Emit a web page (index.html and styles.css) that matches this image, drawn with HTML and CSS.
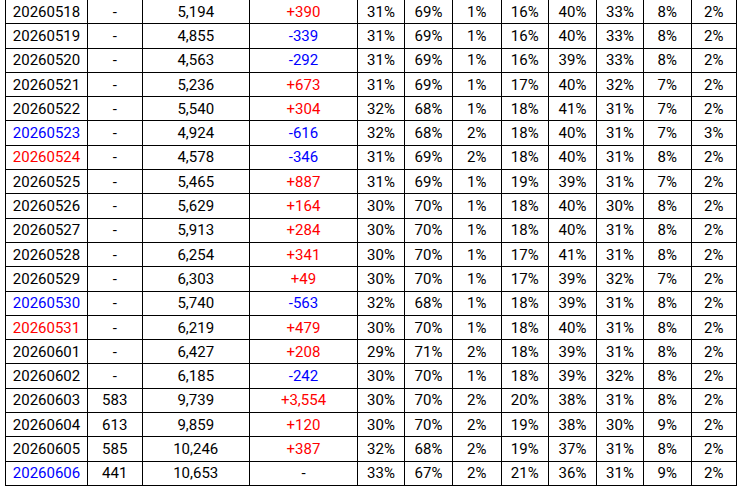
FILE: index.html
```html
<!DOCTYPE html>
<html>
<head>
<meta charset="utf-8">
<link rel="stylesheet" href="styles.css">
</head>
<body>
<div class="wrap">
<table class="grid">
<colgroup>
<col class="c-date"><col class="c-a"><col class="c-b"><col class="c-c">
<col class="c-p1"><col class="c-p2"><col class="c-p3"><col class="c-p4">
<col class="c-p5"><col class="c-p6"><col class="c-p7"><col class="c-p8">
</colgroup>
<tbody>
<tr><td>20260518</td><td>-</td><td>5,194</td><td class="up">+390</td><td>31%</td><td>69%</td><td>1%</td><td>16%</td><td>40%</td><td>33%</td><td>8%</td><td>2%</td></tr>
<tr><td>20260519</td><td>-</td><td>4,855</td><td class="down">-339</td><td>31%</td><td>69%</td><td>1%</td><td>16%</td><td>40%</td><td>33%</td><td>8%</td><td>2%</td></tr>
<tr><td>20260520</td><td>-</td><td>4,563</td><td class="down">-292</td><td>31%</td><td>69%</td><td>1%</td><td>16%</td><td>39%</td><td>33%</td><td>8%</td><td>2%</td></tr>
<tr><td>20260521</td><td>-</td><td>5,236</td><td class="up">+673</td><td>31%</td><td>69%</td><td>1%</td><td>17%</td><td>40%</td><td>32%</td><td>7%</td><td>2%</td></tr>
<tr><td>20260522</td><td>-</td><td>5,540</td><td class="up">+304</td><td>32%</td><td>68%</td><td>1%</td><td>18%</td><td>41%</td><td>31%</td><td>7%</td><td>2%</td></tr>
<tr><td class="sat">20260523</td><td>-</td><td>4,924</td><td class="down">-616</td><td>32%</td><td>68%</td><td>2%</td><td>18%</td><td>40%</td><td>31%</td><td>7%</td><td>3%</td></tr>
<tr><td class="sun">20260524</td><td>-</td><td>4,578</td><td class="down">-346</td><td>31%</td><td>69%</td><td>2%</td><td>18%</td><td>40%</td><td>31%</td><td>8%</td><td>2%</td></tr>
<tr><td>20260525</td><td>-</td><td>5,465</td><td class="up">+887</td><td>31%</td><td>69%</td><td>1%</td><td>19%</td><td>39%</td><td>31%</td><td>7%</td><td>2%</td></tr>
<tr><td>20260526</td><td>-</td><td>5,629</td><td class="up">+164</td><td>30%</td><td>70%</td><td>1%</td><td>18%</td><td>40%</td><td>30%</td><td>8%</td><td>2%</td></tr>
<tr><td>20260527</td><td>-</td><td>5,913</td><td class="up">+284</td><td>30%</td><td>70%</td><td>1%</td><td>18%</td><td>40%</td><td>31%</td><td>8%</td><td>2%</td></tr>
<tr><td>20260528</td><td>-</td><td>6,254</td><td class="up">+341</td><td>30%</td><td>70%</td><td>1%</td><td>17%</td><td>41%</td><td>31%</td><td>8%</td><td>2%</td></tr>
<tr><td>20260529</td><td>-</td><td>6,303</td><td class="up">+49</td><td>30%</td><td>70%</td><td>1%</td><td>17%</td><td>39%</td><td>32%</td><td>7%</td><td>2%</td></tr>
<tr><td class="sat">20260530</td><td>-</td><td>5,740</td><td class="down">-563</td><td>32%</td><td>68%</td><td>1%</td><td>18%</td><td>39%</td><td>31%</td><td>8%</td><td>2%</td></tr>
<tr><td class="sun">20260531</td><td>-</td><td>6,219</td><td class="up">+479</td><td>30%</td><td>70%</td><td>1%</td><td>18%</td><td>40%</td><td>31%</td><td>8%</td><td>2%</td></tr>
<tr><td>20260601</td><td>-</td><td>6,427</td><td class="up">+208</td><td>29%</td><td>71%</td><td>2%</td><td>18%</td><td>39%</td><td>31%</td><td>8%</td><td>2%</td></tr>
<tr><td>20260602</td><td>-</td><td>6,185</td><td class="down">-242</td><td>30%</td><td>70%</td><td>1%</td><td>18%</td><td>39%</td><td>32%</td><td>8%</td><td>2%</td></tr>
<tr><td>20260603</td><td>583</td><td>9,739</td><td class="up">+3,554</td><td>30%</td><td>70%</td><td>2%</td><td>20%</td><td>38%</td><td>31%</td><td>8%</td><td>2%</td></tr>
<tr><td>20260604</td><td>613</td><td>9,859</td><td class="up">+120</td><td>30%</td><td>70%</td><td>2%</td><td>19%</td><td>38%</td><td>30%</td><td>9%</td><td>2%</td></tr>
<tr><td>20260605</td><td>585</td><td>10,246</td><td class="up">+387</td><td>32%</td><td>68%</td><td>2%</td><td>19%</td><td>37%</td><td>31%</td><td>8%</td><td>2%</td></tr>
<tr><td class="sat">20260606</td><td>441</td><td>10,653</td><td>-</td><td>33%</td><td>67%</td><td>2%</td><td>21%</td><td>36%</td><td>31%</td><td>9%</td><td>2%</td></tr>
</tbody>
</table>
</div>
</body>
</html>
```

FILE: styles.css
```css
html, body {
  margin: 0;
  padding: 0;
  background: #ffffff;
}

.wrap {
  padding-left: 5px;
  margin-top: -1px;
}

.grid {
  border-collapse: collapse;
  table-layout: fixed;
  width: 732px;
  font-family: Roboto, "Liberation Sans", sans-serif;
  font-size: 15px;
  color: #000000;
}

.grid td {
  border: 1px solid #000000;
  height: 24.3px;
  padding: 0;
  text-align: center;
  vertical-align: middle;
  line-height: 18px;
  box-sizing: border-box;
}

.c-date { width: 82px; }
.c-a { width: 54.5px; }
.c-b { width: 107.5px; }
.c-c { width: 108px; }
.c-p1 { width: 47px; }
.c-p2 { width: 48px; }
.c-p3 { width: 48.5px; }
.c-p4 { width: 47.5px; }
.c-p5 { width: 48px; }
.c-p6 { width: 47px; }
.c-p7 { width: 47.5px; }
.c-p8 { width: 45.5px; }

.up { color: #ff0000; }
.down { color: #0000ff; }
.sat { color: #0000ff; }
.sun { color: #ff0000; }
```
